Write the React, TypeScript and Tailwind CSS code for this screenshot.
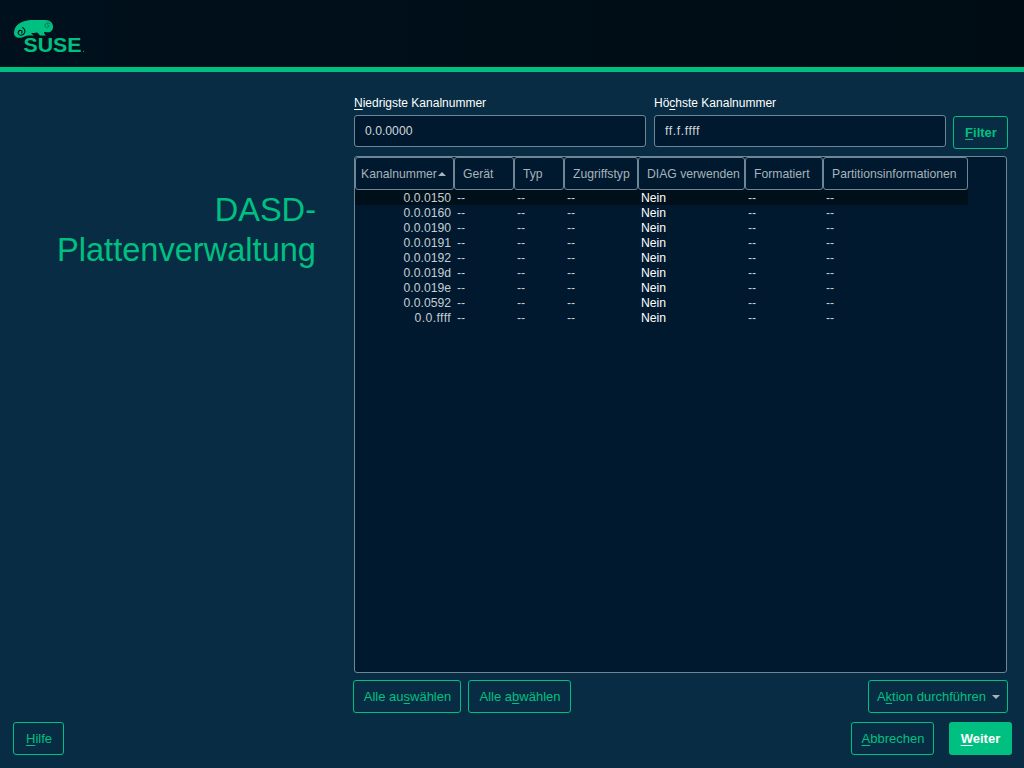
const rows = ['0.0.0150', '0.0.0160', '0.0.0190', '0.0.0191', '0.0.0192', '0.0.019d', '0.0.019e', '0.0.0592', '0.0.ffff'];

const columns = [
  { title: 'Gerät', width: 'w-[60px]' },
  { title: 'Typ', width: 'w-[50px]' },
  { title: 'Zugriffstyp', width: 'w-[74px]' },
  { title: 'DIAG verwenden', width: 'w-[107px]' },
  { title: 'Formatiert', width: 'w-[78px]' },
  { title: 'Partitionsinformationen', width: 'w-[145px]' },
];

function Logo() {
  return (
    <svg width="72" height="36" viewBox="13 19 72 36" className="block">
      <path
        d="M14 33 C14 25 22 20 32 20 L45 20 C50.5 20 53 23 53 27 C53 31 50 33 46 32 L44 32 C44 33.5 45 34.5 46 35.5 L40 35.5 C39 34 38 33 37 32.5 C35 33 33 33 31 33 C32 34 33 35 34 35.5 L28 35.5 C26 35.5 25 36.5 22 37.5 C17 38.5 14 36.5 14 33 Z"
        fill="#00c081"
      />
      <path d="M21 33 C22.5 33 22.5 31 21 30.5 C19 30 17.5 32 18.5 34 C20 36 23 35.5 24.5 33 C25.5 31 24.5 28 22 27.5" fill="none" stroke="#00101c" strokeWidth="1.1" />
      <path d="M47 25 C48.5 24.5 49.5 26 48.5 27 C47 28.5 44.5 27 45 25 C45.5 23 48.5 22 50.5 24" fill="none" stroke="#0a6b55" strokeWidth="1" />
      <text x="23.5" y="52" fontFamily="'Liberation Sans', sans-serif" fontWeight="700" fontSize="21" fill="#00c081" textLength="58" lengthAdjust="spacingAndGlyphs">
        SUSE
      </text>
      <circle cx="83.5" cy="51.5" r="0.6" fill="#00c081" />
    </svg>
  );
}

function Btn({ pre, mnemonic, post, className }: { pre?: string; mnemonic: string; post: string; className: string }) {
  return (
    <button className={`flex items-center justify-center rounded-[3px] border border-[#00c081] pl-[1px] text-[13px] text-[#00c081] ${className}`}>
      <span>
        {pre}
        <span className="underline underline-offset-2">{mnemonic}</span>
        {post}
      </span>
    </button>
  );
}

export default function App() {
  return (
    <div className="flex h-[768px] w-[1024px] flex-col overflow-hidden bg-[#072c43] font-['Liberation_Sans',sans-serif] text-[12.2px] text-white">
      <header className="flex h-[67px] items-start bg-gradient-to-r from-[#00101c] to-[#000c14] pl-[13px] pt-[19px]">
        <Logo />
      </header>
      <div className="h-[5px] bg-[#00c081]" />

      <main className="flex min-h-0 flex-1">
        <aside className="w-[354px] shrink-0 pr-[38px] pt-[118px] text-right text-[32.6px] leading-[40px] text-[#00c081]">
          DASD-
          <br />
          Plattenverwaltung
        </aside>

        <section className="flex w-[654px] flex-col pt-[24px]">
          <div className="flex items-end">
            <label className="w-[300px]">
              <div className="mb-[4px] h-[15px] text-[12px] leading-[15px]">
                <span className="underline underline-offset-2">N</span>iedrigste Kanalnummer
              </div>
              <div className="flex h-[32px] w-[292px] items-center rounded-[3px] border border-[#6d8796] bg-[#00192e] pl-[10px] pt-[1px] text-[#d0d8dc]">0.0.0000</div>
            </label>
            <label className="w-[299px]">
              <div className="mb-[4px] h-[15px] text-[12px] leading-[15px]">
                Hö<span className="underline underline-offset-2">c</span>hste Kanalnummer
              </div>
              <div className="flex h-[32px] w-[292px] items-center rounded-[3px] border border-[#6d8796] bg-[#00192e] pl-[10px] pt-[1px] tracking-[0.6px] text-[#d0d8dc]">ff.f.ffff</div>
            </label>
            <Btn mnemonic="F" post="ilter" className="mb-[-2px] h-[33px] w-[55px] font-bold" />
          </div>

          <div className="mt-[9px] h-[517px] w-[653px] rounded-[3px] border border-[#6d8796] bg-[#00192e]">
            <div className="flex h-[33px] text-[#a5b3bc]">
              <div className="flex w-[99px] items-center justify-between rounded-[3px] border border-[#6d8796] pl-[5px] pr-[7px] pt-[1px]">
                Kanalnummer
                <span className="h-0 w-0 border-x-[4px] border-b-[4px] border-x-transparent border-b-[#a5b3bc]" />
              </div>
              {columns.map((c) => (
                <div key={c.title} className={`flex items-center rounded-[3px] border border-[#6d8796] pl-[8px] pt-[1px] ${c.width}`}>
                  {c.title}
                </div>
              ))}
            </div>
            {rows.map((r, i) => (
              <div key={r} className={`flex h-[15px] w-[613px] items-start pt-[1px] leading-[15px] ${i === 0 ? 'bg-[#00101a]' : ''}`}>
                <div className={`w-[96px] text-right text-[#c5ced4] ${r === '0.0.ffff' ? 'tracking-[0.4px]' : ''}`}>{r}</div>
                <div className="w-[66px] pl-[6px] text-[#c5ced4]">--</div>
                <div className="w-[50px] text-[#c5ced4]">--</div>
                <div className="w-[74px] text-[#c5ced4]">--</div>
                <div className="w-[107px]">Nein</div>
                <div className="w-[78px] text-[#c5ced4]">--</div>
                <div className="text-[#c5ced4]">--</div>
              </div>
            ))}
          </div>

          <div className="mt-[7px] flex">
            <Btn pre="Alle au" mnemonic="s" post="wählen" className="ml-[-1px] h-[33px] w-[108px]" />
            <Btn pre="Alle a" mnemonic="b" post="wählen" className="ml-[7px] h-[33px] w-[103px]" />
            <button className="ml-auto flex h-[33px] w-[140px] items-center justify-center gap-[6px] rounded-[3px] border border-[#00c081] pl-[1px] text-[13px] text-[#00c081]">
              <span>
                A<span className="underline underline-offset-2">k</span>tion durchführen
              </span>
              <span className="h-0 w-0 border-x-[4px] border-t-[4px] border-x-transparent border-t-[#a5b3bc]" />
            </button>
          </div>
        </section>
      </main>

      <footer className="flex h-[46px] items-start pl-[13px] pr-[12px]">
        <Btn mnemonic="H" post="ilfe" className="h-[33px] w-[51px]" />
        <Btn mnemonic="A" post="bbrechen" className="ml-auto h-[33px] w-[83px]" />
        <button className="ml-[15px] h-[33px] w-[63px] rounded-[3px] bg-[#00c081] text-[13px] font-bold text-white">
          <span className="underline underline-offset-2">W</span>eiter
        </button>
      </footer>
    </div>
  );
}
